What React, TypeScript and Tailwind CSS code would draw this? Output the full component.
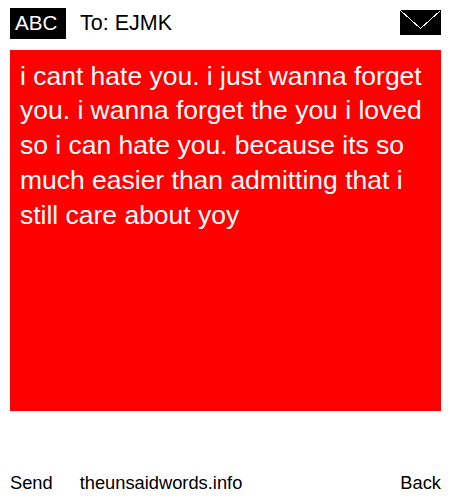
export default function App() {
  return (
    <div className="w-[450px] h-[500px] bg-white text-black flex flex-col font-['Liberation_Sans',Arial,sans-serif]">
      <div className="h-[50px] flex items-start pt-2 pl-2.5 pr-[9px]">
        <div className="w-14 h-[31px] bg-black text-white text-[20.6px] pl-[5px] flex items-center">ABC</div>
        <div className="ml-3.5 h-[31px] flex items-center text-[21.5px]">To: EJMK</div>
        <svg className="ml-auto mt-0.5" width="41" height="25" viewBox="0 0 41 25" shapeRendering="crispEdges">
          <rect width="41" height="25" fill="#000" />
          <path d="M0.5 0.5 L20.5 18.5 L40.5 0.5" fill="none" stroke="#fff" strokeWidth="1" />
        </svg>
      </div>
      <div className="ml-2.5 w-[431px] h-[361px] bg-[#ff0000] text-white text-[26.47px] leading-[34.75px] px-2.5 pt-[8.5px]">
        i cant hate you. i just wanna forget you. i wanna forget the you i loved so i can hate you. because its so much easier than admitting that i still care about yoy
      </div>
      <div className="mt-auto h-[34px] pl-2.5 pr-[9px] flex items-center text-[18.3px]">
        <span>Send</span>
        <span className="ml-[27px]">theunsaidwords.info</span>
        <span className="ml-auto">Back</span>
      </div>
    </div>
  )
}
